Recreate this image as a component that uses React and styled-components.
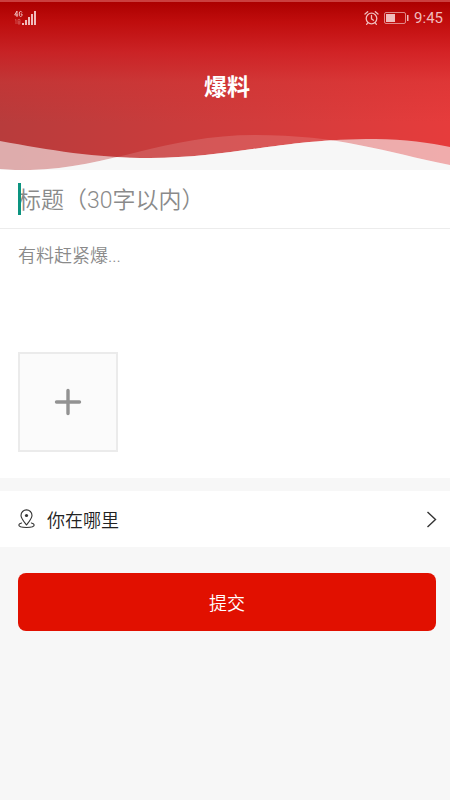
import { useState } from "react";
import styled, { createGlobalStyle } from "styled-components";

const GlobalStyle = createGlobalStyle`
    * {
        box-sizing: border-box;
    }
    body {
        margin: 0;
        min-height: 100vh;
        background: #f7f7f7;
        color: #333;
        font-family: Roboto, "Noto Sans CJK SC", sans-serif;
    }
    input, textarea, button {
        font-family: inherit;
    }
`;

const StyledHeader = styled.header`
    position: relative;
    height: 170px;
    border-top: 2px solid #cb3f3f;
    background:
        linear-gradient(180deg, #ac0000 0, rgba(190, 8, 8, 0.9) 20px, rgba(205, 24, 28, 0.7) 50px, rgba(210, 44, 44, 0.35) 80px, rgba(215, 48, 48, 0) 120px),
        linear-gradient(90deg, #b83c3c, #e63c3c);
`;

const StyledWaves = styled.svg`
    position: absolute;
    left: 0;
    bottom: 0;
    display: block;
    width: 100%;
    height: 40px;
`;

const StyledStatusBar = styled.div`
    display: flex;
    align-items: center;
    justify-content: space-between;
    height: 32px;
    padding: 0 7px 0 14px;
    color: #f0bcbc;
`;

const StyledStatusGroup = styled.div`
    display: flex;
    align-items: center;
    gap: 5px;
    font-size: 15px;
    line-height: 20px;
`;

const StyledHeading = styled.h1`
    margin: 36px 0 0;
    padding-left: 4px;
    color: #fff;
    font-size: 23px;
    line-height: 36px;
    font-weight: 700;
    text-align: center;
`;

const StyledForm = styled.form`
    display: block;
`;

const StyledCard = styled.section`
    margin-bottom: 13px;
    padding-bottom: 26px;
    background: #fff;
`;

const StyledTitleField = styled.div`
    position: relative;
    padding: 0 18px;
    border-bottom: 1px solid #ececec;
`;

const StyledCaret = styled.span`
    position: absolute;
    top: 13px;
    left: 18px;
    width: 3px;
    height: 32px;
    background: #0c9480;
`;

const StyledTitleInput = styled.input`
    display: block;
    width: 100%;
    height: 58px;
    padding: 2px 0 0;
    border: none;
    outline: none;
    background: transparent;
    color: #333;
    caret-color: #0c9480;
    font-size: 23px;
    font-weight: 350;
    &::placeholder {
        color: #8a8a8a;
    }
`;

const StyledTextarea = styled.textarea`
    display: block;
    width: 100%;
    height: 123px;
    padding: 14px 18px;
    border: none;
    outline: none;
    resize: none;
    background: transparent;
    color: #333;
    font-size: 18px;
    line-height: 26px;
    font-weight: 350;
    &::placeholder {
        color: #8a8a8a;
    }
`;

const StyledUploadButton = styled.button`
    display: flex;
    align-items: center;
    justify-content: center;
    width: 100px;
    height: 100px;
    margin-left: 18px;
    padding: 0;
    border: 2px solid #ebebeb;
    background: #fbfbfb;
    cursor: pointer;
`;

const StyledLocationButton = styled.button`
    display: flex;
    align-items: center;
    gap: 12px;
    width: 100%;
    height: 56px;
    padding: 0 13px 0 18px;
    border: none;
    background: #fff;
    color: #222;
    font-size: 18px;
    font-weight: 350;
    text-align: left;
    cursor: pointer;
`;

const StyledLocationText = styled.span`
    flex: 1;
`;

const StyledFooter = styled.div`
    padding: 26px 14px 26px 18px;
`;

const StyledSubmitButton = styled.button`
    display: block;
    width: 100%;
    height: 58px;
    border: none;
    border-radius: 8px;
    background: #e11000;
    color: #fff;
    font-size: 18px;
    font-weight: 350;
    cursor: pointer;
`;

const Waves = () => (
    <StyledWaves viewBox="0 0 450 40" preserveAspectRatio="none" aria-hidden="true">
        <defs>
            <clipPath id="backWave">
                <path d="M0 39 C10 40 20 40 30 40 C110 38 165 5 255 5 C340 5 385 22 450 35 V40 H0 Z" />
            </clipPath>
        </defs>
        <path fill="#fff" fillOpacity="0.14" d="M0 39 C10 40 20 40 30 40 C110 38 165 5 255 5 C340 5 385 22 450 35 V40 H0 Z" />
        <path fill="#f7f7f7" fillOpacity="0.6" d="M0 11 C50 20 95 28 150 28 C230 28 280 9 375 9 C405 9 430 13 450 17 V40 H0 Z" />
        <path fill="#f7f7f7" clipPath="url(#backWave)" d="M0 11 C50 20 95 28 150 28 C230 28 280 9 375 9 C405 9 430 13 450 17 V40 H0 Z" />
    </StyledWaves>
);

const SignalIcon = () => (
    <svg width="23" height="16" viewBox="0 0 23 16" fill="currentColor" aria-hidden="true">
        <path fill="none" stroke="currentColor" strokeWidth="1" d="M3 7V1L.7 5H4M8 2.5C7.5 1 5.3 1 5.3 3V5C5.3 7 8 7 8 5V4H6.7" />
        <path fill="none" stroke="currentColor" strokeOpacity="0.35" d="M1 10l1-.5V14M4 9.5h2V14H4zM4 12h2" />
        <path d="M8 13h2v2H8zM11 10h2v5h-2zM14 7h2v8h-2zM17 4h2v11h-2zM20 1h2v14h-2z" />
    </svg>
);

const AlarmIcon = () => (
    <svg width="15" height="16" viewBox="0 0 15 16" fill="none" stroke="currentColor" strokeWidth="1.3" strokeLinecap="round" aria-hidden="true">
        <circle cx="7.5" cy="8.5" r="5.3" />
        <path d="M7.5 5.5v3.3l2 1.4M1 4l2.7-2.3M14 4l-2.7-2.3M3.8 12.8l-1.2 1.5M11.2 12.8l1.2 1.5" />
    </svg>
);

const BatteryIcon = () => (
    <svg width="25" height="12" viewBox="0 0 25 12" aria-hidden="true">
        <rect x="0.5" y="0.5" width="21" height="11" rx="1.5" fill="none" stroke="currentColor" strokeOpacity="0.7" />
        <rect x="2" y="2" width="9" height="8" fill="currentColor" />
        <path d="M23 3h1.5v6H23z" fill="currentColor" />
    </svg>
);

const PlusIcon = () => (
    <svg width="28" height="28" viewBox="0 0 28 28" stroke="#929292" strokeWidth="3.4" strokeLinecap="round" aria-hidden="true">
        <path d="M14 2.5v23M2.5 14h23" />
    </svg>
);

const PinIcon = () => (
    <svg width="17" height="20" viewBox="0 0 17 20" fill="none" stroke="#333" strokeWidth="1.1" strokeLinejoin="round" aria-hidden="true">
        <path d="M8.5 16C6.3 13 3 9.3 3 6.4a5.5 5.5 0 0 1 11 0C14 9.3 10.7 13 8.5 16Z" />
        <circle cx="8.5" cy="6.5" r="1.6" fill="#333" stroke="none" />
        <path strokeLinecap="round" d="M3.6 14C1.8 14.5 .8 15.2 .8 16c0 1.5 3.4 2.5 7.7 2.5s7.7-1 7.7-2.5c0-.8-1-1.5-2.8-2" />
    </svg>
);

const ChevronIcon = () => (
    <svg width="11" height="17" viewBox="0 0 11 17" fill="none" stroke="#333" strokeWidth="1.4" aria-hidden="true">
        <path d="M1.5 1l8 7.5-8 7.5" />
    </svg>
);

const App = () => {

    const [title, setTitle] = useState("");
    const [content, setContent] = useState("");

    return (
        <>
            <GlobalStyle />
            <StyledHeader>
                <Waves />
                <StyledStatusBar>
                    <SignalIcon />
                    <StyledStatusGroup>
                        <AlarmIcon />
                        <BatteryIcon />
                        <span>9:45</span>
                    </StyledStatusGroup>
                </StyledStatusBar>
                <StyledHeading>爆料</StyledHeading>
            </StyledHeader>
            <StyledForm onSubmit={(e) => e.preventDefault()}>
                <StyledCard>
                    <StyledTitleField>
                        {!title && <StyledCaret />}
                        <StyledTitleInput
                            type="text"
                            aria-label="标题"
                            maxLength={30}
                            placeholder="标题（30字以内）"
                            value={title}
                            onChange={(e) => setTitle(e.target.value)} />
                    </StyledTitleField>
                    <StyledTextarea
                        aria-label="内容"
                        placeholder="有料赶紧爆..."
                        value={content}
                        onChange={(e) => setContent(e.target.value)} />
                    <StyledUploadButton type="button" aria-label="添加图片">
                        <PlusIcon />
                    </StyledUploadButton>
                </StyledCard>
                <StyledLocationButton type="button">
                    <PinIcon />
                    <StyledLocationText>你在哪里</StyledLocationText>
                    <ChevronIcon />
                </StyledLocationButton>
                <StyledFooter>
                    <StyledSubmitButton type="submit">提交</StyledSubmitButton>
                </StyledFooter>
            </StyledForm>
        </>
    );
};

export default App;
